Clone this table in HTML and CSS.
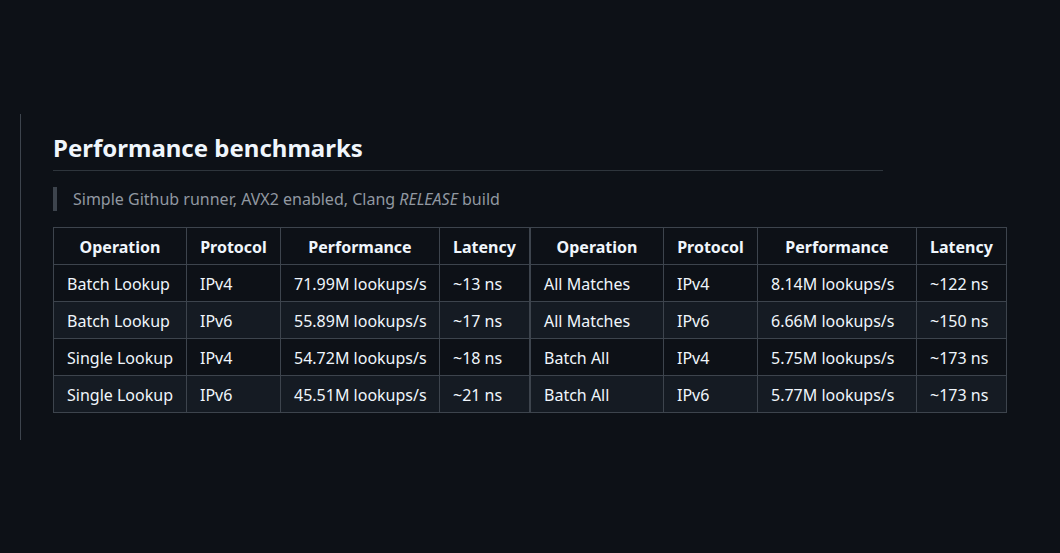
FILE: index.html
```html
<!DOCTYPE html>
<html lang="en">
<head>
<meta charset="utf-8">
<title>Performance benchmarks</title>
<link rel="stylesheet" href="styles.css">
</head>
<body>
<div class="page">
  <article class="markdown">
    <h2 class="title">Performance benchmarks</h2>
    <blockquote class="note">Simple Github runner, AVX2 enabled, Clang <em>RELEASE</em> build</blockquote>
    <div class="tables">
      <table class="bench">
        <colgroup>
          <col class="c-op"><col class="c-proto"><col class="c-perf"><col class="c-lat">
        </colgroup>
        <thead>
          <tr><th>Operation</th><th>Protocol</th><th>Performance</th><th>Latency</th></tr>
        </thead>
        <tbody>
          <tr><td>Batch Lookup</td><td>IPv4</td><td>71.99M lookups/s</td><td>~13 ns</td></tr>
          <tr><td>Batch Lookup</td><td>IPv6</td><td>55.89M lookups/s</td><td>~17 ns</td></tr>
          <tr><td>Single Lookup</td><td>IPv4</td><td>54.72M lookups/s</td><td>~18 ns</td></tr>
          <tr><td>Single Lookup</td><td>IPv6</td><td>45.51M lookups/s</td><td>~21 ns</td></tr>
        </tbody>
      </table>
      <table class="bench">
        <colgroup>
          <col class="c-op"><col class="c-proto"><col class="c-perf"><col class="c-lat">
        </colgroup>
        <thead>
          <tr><th>Operation</th><th>Protocol</th><th>Performance</th><th>Latency</th></tr>
        </thead>
        <tbody>
          <tr><td>All Matches</td><td>IPv4</td><td>8.14M lookups/s</td><td>~122 ns</td></tr>
          <tr><td>All Matches</td><td>IPv6</td><td>6.66M lookups/s</td><td>~150 ns</td></tr>
          <tr><td>Batch All</td><td>IPv4</td><td>5.75M lookups/s</td><td>~173 ns</td></tr>
          <tr><td>Batch All</td><td>IPv6</td><td>5.77M lookups/s</td><td>~173 ns</td></tr>
        </tbody>
      </table>
    </div>
  </article>
</div>
</body>
</html>
```
FILE: styles.css
```css
html, body {
  margin: 0;
  padding: 0;
  background: #0d1117;
}

body {
  font-family: "Noto Sans", "Open Sans", "DejaVu Sans", sans-serif;
  font-size: 16px;
  line-height: 1.5;
  color: #f0f6fc;
}

.page {
  padding: 114px 0 0 20px;
}

.markdown {
  border-left: 1px solid #3d444d;
  padding: 19px 0 27px 32px;
  width: 830px;
}

.title {
  margin: 0 0 16px;
  font-size: 24px;
  font-weight: 700;
  line-height: 1.25;
  padding-bottom: 7.2px;
  border-bottom: 1px solid rgba(61, 68, 77, 0.7);
}

.note {
  margin: 0 0 16px;
  padding: 0 16px;
  border-left: 4px solid #3d444d;
  color: #9198a1;
}

.tables {
  display: flex;
  width: max-content;
}

.bench {
  border-collapse: collapse;
  border-spacing: 0;
  table-layout: fixed;
  width: 476px;
}

.c-op { width: 133px; }
.c-proto { width: 94px; }
.c-perf { width: 159px; }
.c-lat { width: 90px; }

.bench th,
.bench td {
  padding: 7px 13px 5px;
  border: 1px solid #3d444d;
  white-space: nowrap;
}

.bench th {
  font-weight: 700;
  text-align: center;
}

.bench td {
  text-align: left;
}

.bench tr {
  background: #0d1117;
}

.bench tbody tr:nth-child(2n) {
  background: #151b23;
}
```
